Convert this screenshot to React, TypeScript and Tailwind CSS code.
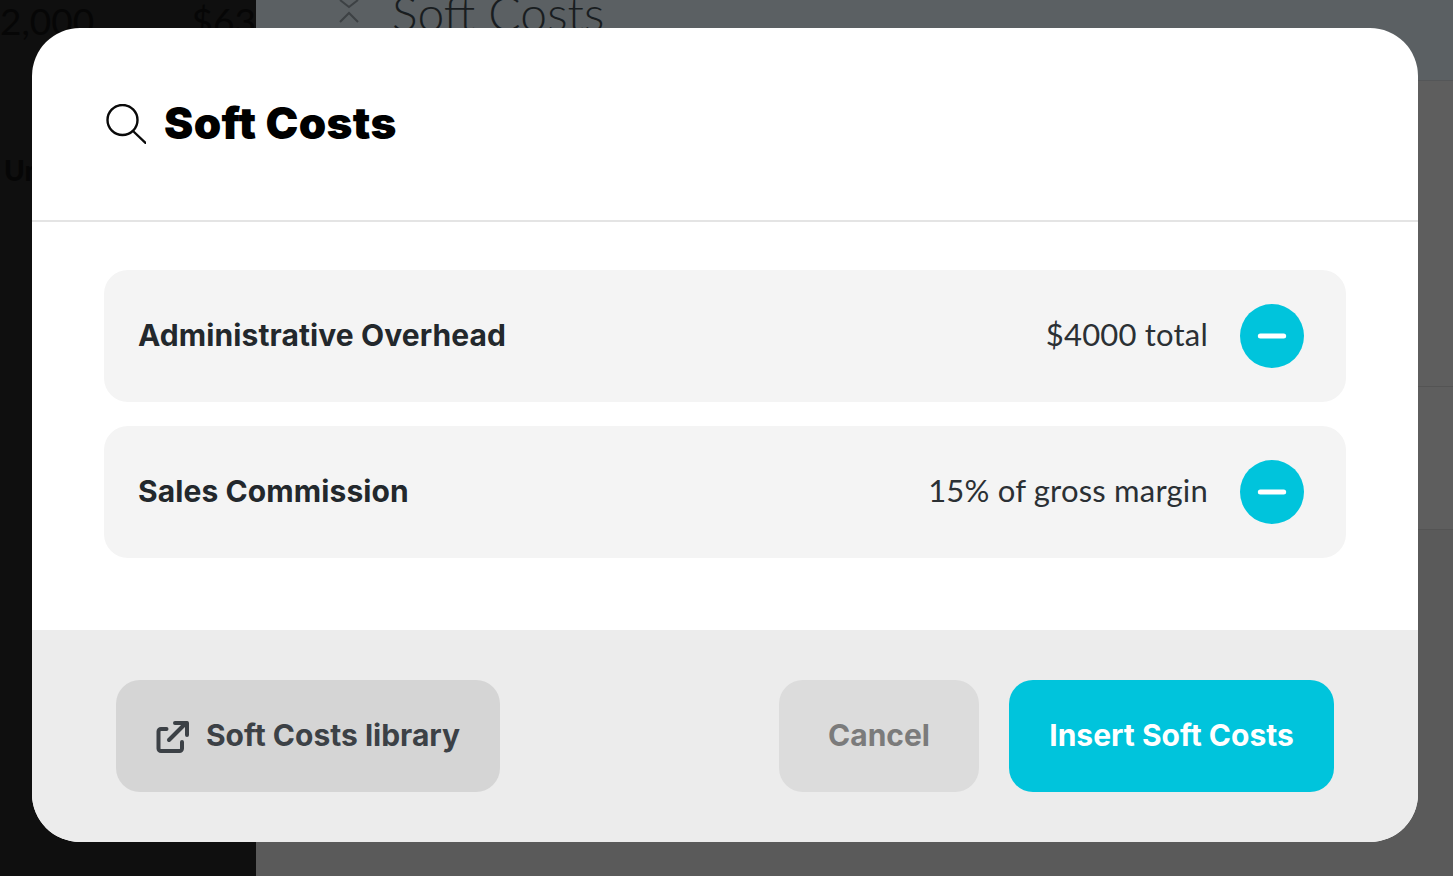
import { Minus } from "lucide-react";

const font = "font-['Lato','Liberation_Sans',sans-serif]";
const boldFont = "font-['Inter','Liberation_Sans',sans-serif]";

function CostRow({ name, value }: { name: string; value: string }) {
  return (
    <div className="flex h-[132px] items-center rounded-[24px] bg-[#f4f4f4] pl-[34px] pr-[42px]">
      <span className={`-mt-[2px] text-[30px] font-bold tracking-[0.1px] text-[#23282c] ${boldFont}`}>{name}</span>
      <span className="ml-auto -mt-[3px] text-[31px] font-normal tracking-[0.2px] text-[#2b3034]">{value}</span>
      <button className="ml-8 flex h-16 w-16 items-center justify-center rounded-full bg-[#00c4dc] text-white">
        <Minus size={40} strokeWidth={3} />
      </button>
    </div>
  );
}

function Backdrop() {
  return (
    <div className="flex h-[876px] w-full overflow-hidden">
      <aside className="relative w-[256px] shrink-0 bg-[#0f0f0f] text-[#060606]">
        <div className="flex justify-between pt-[2px] text-[37px] leading-none">
          <span>2,000</span>
          <span>$63</span>
        </div>
        <div className="pl-[4px] pt-[110px] text-[28px] font-black">Un</div>
      </aside>
      <main className="flex flex-1 flex-col bg-[#5e5e5e]">
        <div className="flex h-[81px] items-start gap-[30px] border-b border-[#545658] bg-[#5b6063] pl-[80px] text-[#191d20]">
          <svg width="26" height="26" viewBox="0 0 26 26" fill="none" stroke="#3d4144" strokeWidth="2">
            <path d="M4 0l9 7 9-7" />
            <path d="M4 22l9-9 9 9" />
          </svg>
          <span className="-mt-[23px] text-[48px] font-light">Soft Costs</span>
        </div>
        <div className="h-[306px] border-b border-[#545454]" />
        <div className="h-[143px] border-b border-[#545454]" />
        <div className="flex-1 bg-[#5a5a5a]" />
      </main>
    </div>
  );
}

export default function App() {
  return (
    <div className={`relative h-[876px] w-full overflow-hidden ${font}`}>
      <Backdrop />
      <div className="absolute left-[32px] top-[28px] flex h-[814px] w-[1386px] flex-col overflow-hidden rounded-[48px] bg-white">
        <header className="flex h-[194px] shrink-0 items-center gap-[18px] border-b-2 border-[#e4e4e4] pb-[2px] pl-[74px]">
          <svg width="40" height="40" viewBox="0 0 40 40" fill="none" stroke="#0a0a0a" strokeWidth="2.4" strokeLinecap="round" className="mt-[2px]">
            <circle cx="16.5" cy="16" r="15" />
            <path d="M27.5 27.5 39.5 39" />
          </svg>
          <h1 className={`text-[44px] font-black leading-none tracking-[0.35px] text-black ${boldFont}`}>Soft Costs</h1>
        </header>
        <div className="flex flex-1 flex-col gap-6 px-[72px] pt-[48px]">
          <CostRow name="Administrative Overhead" value="$4000 total" />
          <CostRow name="Sales Commission" value="15% of gross margin" />
        </div>
        <footer className="flex h-[212px] shrink-0 items-start bg-[#ececec] pl-[84px] pr-[84px] pt-[50px]">
          <button className={`flex h-[112px] w-[384px] items-center justify-center gap-[17px] rounded-[24px] bg-[#d5d5d5] pb-[2px] text-[30px] font-bold text-[#3c4146] ${boldFont}`}>
            <svg width="33" height="33" viewBox="0 0 33 33" fill="none" stroke="#3c4146" strokeWidth="4" strokeLinecap="round" strokeLinejoin="round" className="mt-[2px]">
              <path d="M10.5 9H5a2.5 2.5 0 0 0-2.5 2.5v17A2.5 2.5 0 0 0 5 31h18.5a2.5 2.5 0 0 0 2.5-2.5V22" />
              <path d="M13 20 30 3" />
              <path d="M19 3h12v12" />
            </svg>
            Soft Costs library
          </button>
          <button className={`ml-auto h-[112px] w-[200px] rounded-[24px] bg-[#dcdcdc] pb-[2px] text-[30px] font-bold text-[#7b7b7b] ${boldFont}`}>Cancel</button>
          <button className={`ml-[30px] h-[112px] w-[325px] rounded-[24px] bg-[#00c4dc] pb-[2px] text-[30px] font-bold text-white ${boldFont}`}>Insert Soft Costs</button>
        </footer>
      </div>
    </div>
  );
}
